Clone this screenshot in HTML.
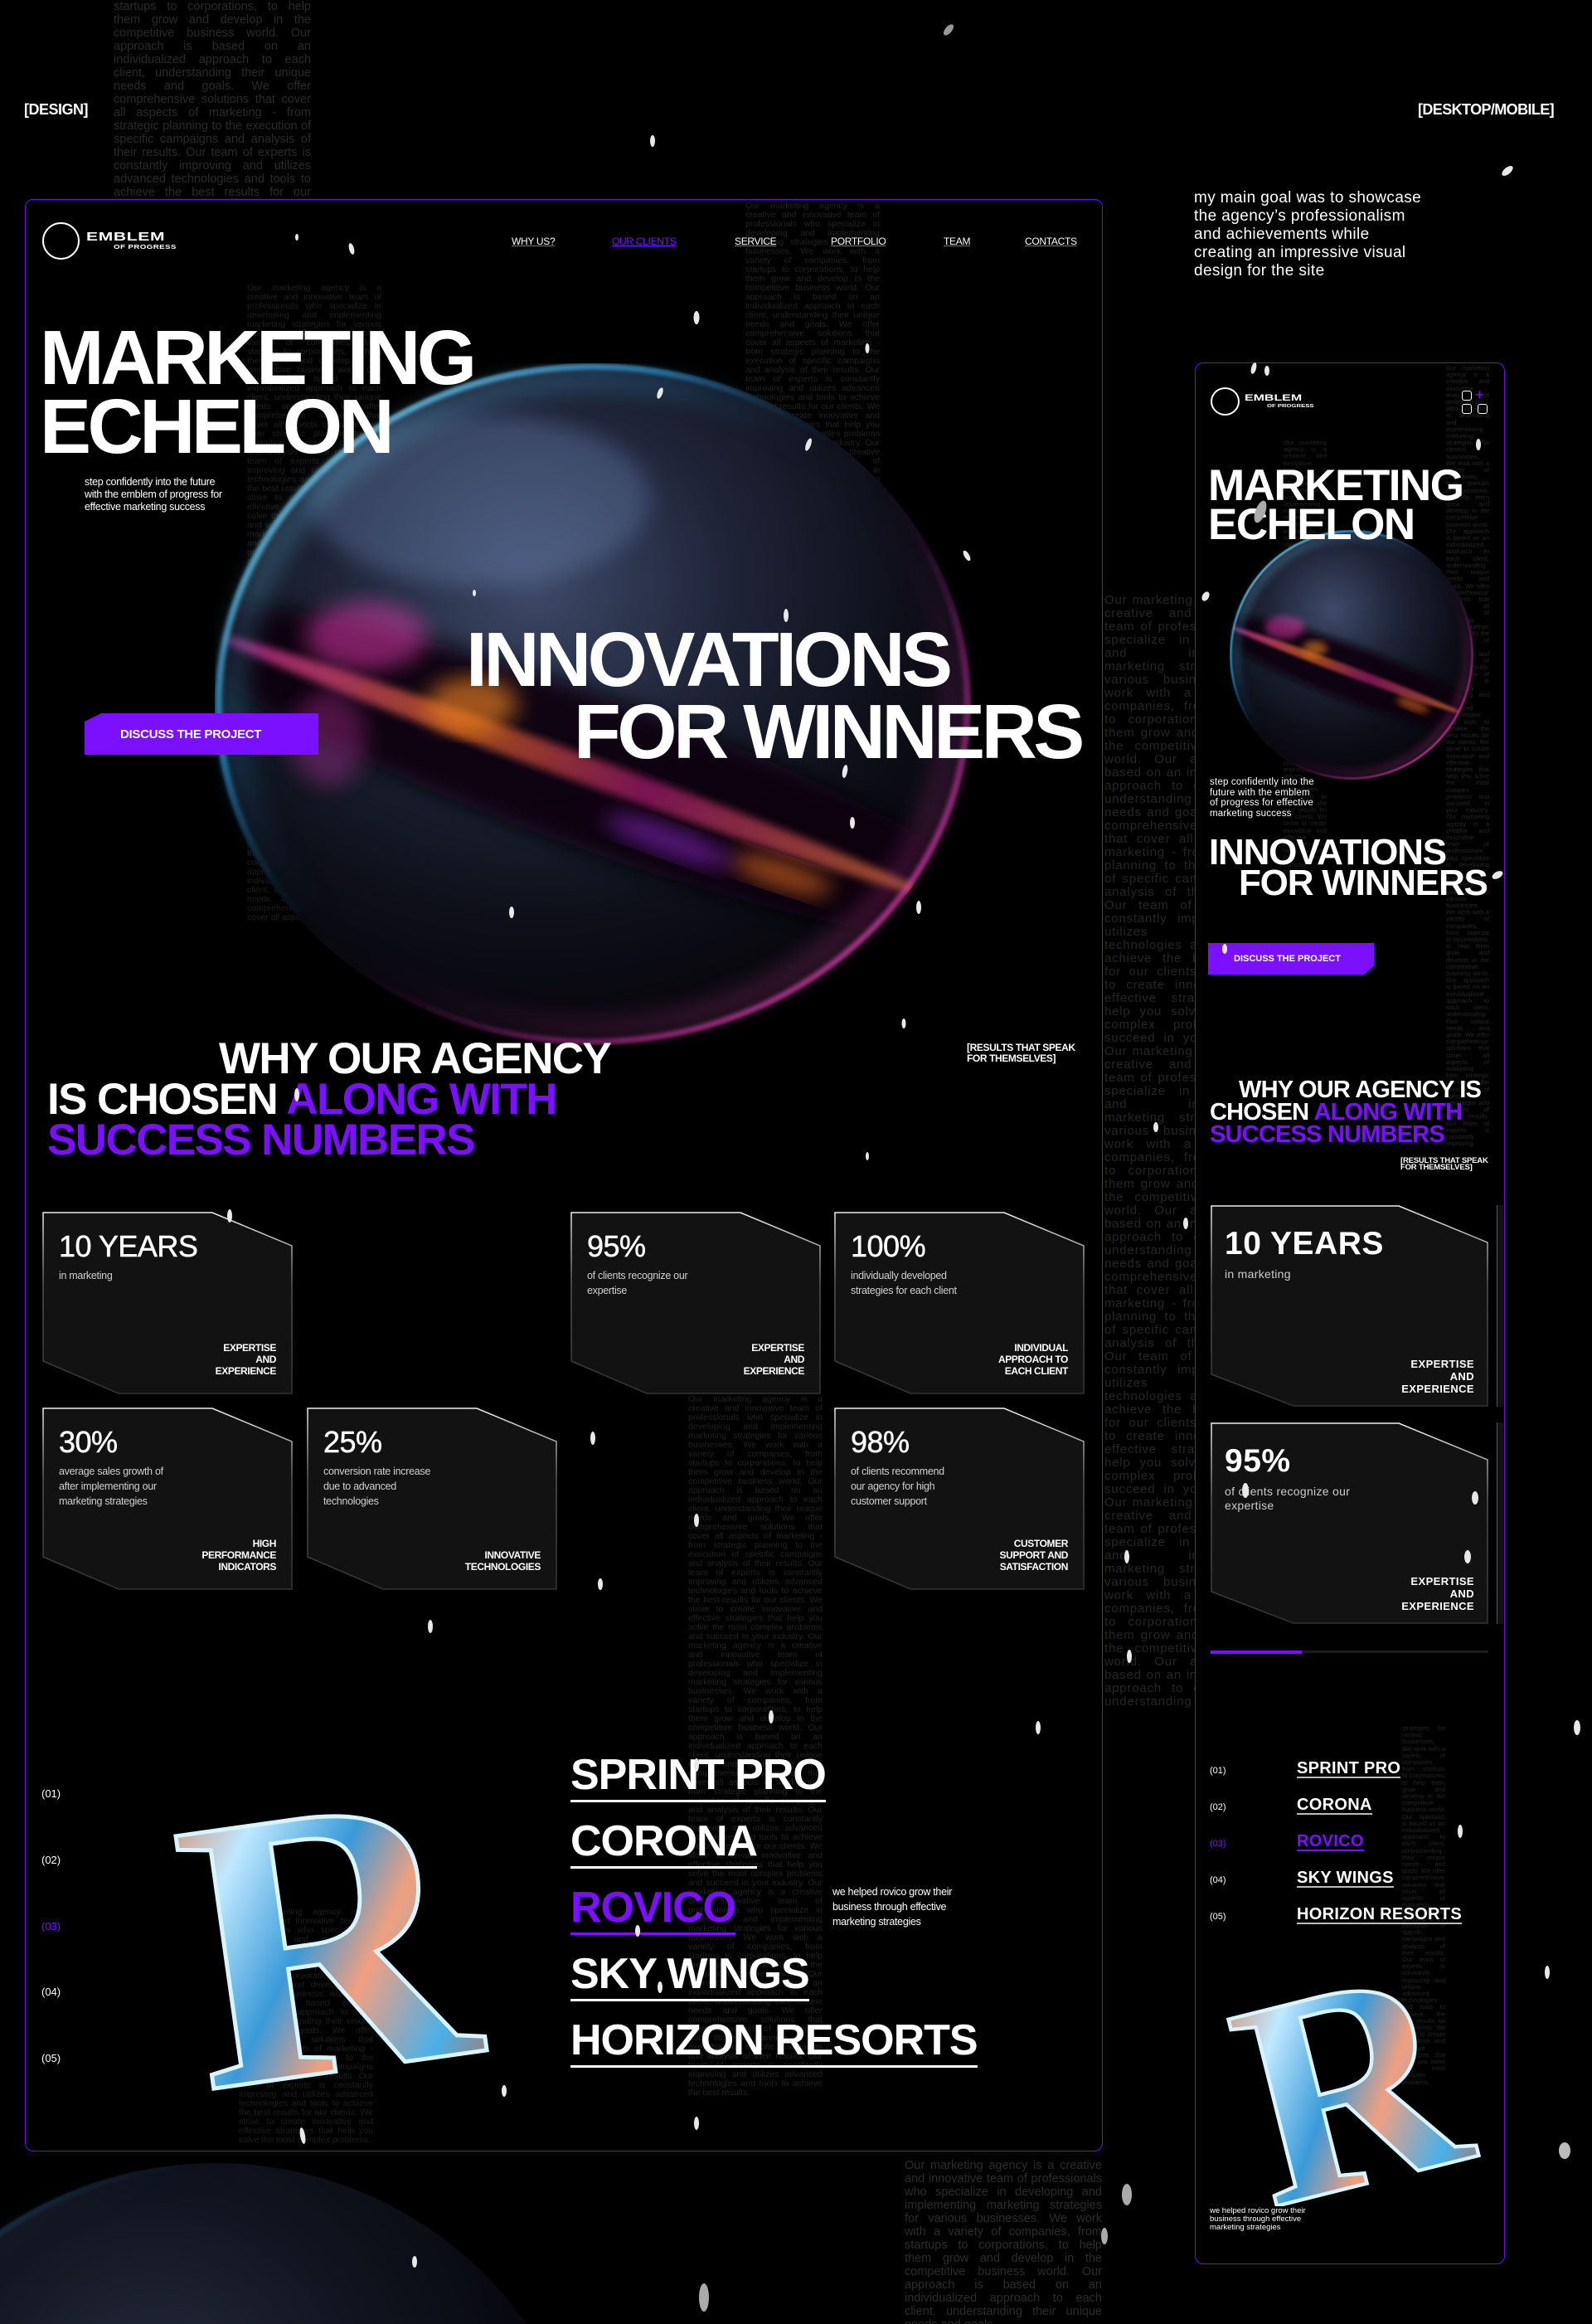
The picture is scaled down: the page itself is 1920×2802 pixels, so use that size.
<!DOCTYPE html>
<html><head><meta charset="utf-8">
<style>
*{margin:0;padding:0;box-sizing:border-box}
html,body{width:1920px;height:2802px;background:#000;overflow:hidden}
body{position:relative;font-family:"Liberation Sans",Arial,sans-serif;color:#fff}
#wrap{position:absolute;left:0;top:0;width:1920px;height:2802px;overflow:hidden}
.a{position:absolute}
.bg{position:absolute;color:#262626;text-align:justify;overflow:hidden;font-family:"Liberation Sans",sans-serif}
.b{font-weight:700}
.nav{position:absolute;top:284px;font-size:12px;text-decoration:underline;text-decoration-color:#777;letter-spacing:-0.3px}
.h1{position:absolute;font-weight:700;font-size:93px;line-height:1;letter-spacing:-4.5px;white-space:nowrap}
.card{position:absolute;width:302px;height:220px}
.card svg{position:absolute;left:0;top:0}
.num{position:absolute;left:20px;top:24px;font-size:36px;line-height:36px;-webkit-text-stroke:.5px #fff;letter-spacing:-0.5px}
.sub{position:absolute;left:20px;top:68px;font-size:12.5px;line-height:18px;color:#cfcfcf;letter-spacing:-0.3px}
.lab{position:absolute;right:20px;bottom:21px;font-size:12px;line-height:14px;text-align:right;font-weight:700;letter-spacing:-0.4px}
.mcard{position:absolute;width:335px;height:243px}
.mcard svg{position:absolute;left:0;top:0}
.mnum{position:absolute;left:17px;top:27px;font-size:39px;line-height:40px;font-weight:700;letter-spacing:0.5px}
.msub{position:absolute;left:17px;top:75px;font-size:14px;line-height:17px;color:#ccc;letter-spacing:.3px}
.mlab{position:absolute;right:17px;bottom:14px;font-size:13px;line-height:15px;text-align:right;font-weight:700;letter-spacing:.4px}
.cl{position:absolute;left:688px;font-size:52px;line-height:52px;font-weight:700;letter-spacing:-1px;border-bottom:3px solid #fff;padding-bottom:4px;white-space:nowrap}
.cn{position:absolute;left:50px;font-size:13px}
.mcl{position:absolute;left:1564px;font-size:20px;line-height:20px;font-weight:700;border-bottom:2px solid #bbb;white-space:nowrap;letter-spacing:.3px}
.mcn{position:absolute;left:1459px;font-size:11px}
.pur{color:#7a10ff}
</style></head><body><div id="wrap">

<svg width="0" height="0" style="position:absolute">
<defs>
<radialGradient id="sb" cx="42%" cy="32%" r="68%"><stop offset="0" stop-color="#3e4a68"/><stop offset=".4" stop-color="#1e2336"/><stop offset=".75" stop-color="#0d0e17"/><stop offset="1" stop-color="#07070a"/></radialGradient>
<linearGradient id="rim" x1="0" y1="0" x2="1" y2="1"><stop offset="0" stop-color="#a8f4ff"/><stop offset=".3" stop-color="#2a9ad8" stop-opacity=".7"/><stop offset=".5" stop-color="#000" stop-opacity="0"/><stop offset=".72" stop-color="#c02aa0" stop-opacity=".5"/><stop offset="1" stop-color="#ff60c0"/></linearGradient>
<linearGradient id="prim" x1="0" y1="0" x2="1" y2=".6"><stop offset="0" stop-color="#4aa0e0"/><stop offset=".4" stop-color="#000" stop-opacity="0"/><stop offset=".7" stop-color="#000" stop-opacity="0"/><stop offset="1" stop-color="#e0501a"/></linearGradient>
<linearGradient id="st" x1="0" y1="0" x2="1" y2="0"><stop offset="0" stop-color="#ff3ad0"/><stop offset=".35" stop-color="#ff7a20"/><stop offset=".6" stop-color="#c02080"/><stop offset="1" stop-color="#ff8a30"/></linearGradient>
<linearGradient id="cg" x1="0" y1="0" x2="0" y2="1"><stop offset="0" stop-color="#eee"/><stop offset=".4" stop-color="#555"/><stop offset="1" stop-color="#333"/></linearGradient>
<linearGradient id="rg" x1="0" y1="0" x2="1" y2="1"><stop offset="0" stop-color="#e06a30"/><stop offset=".25" stop-color="#bfe8ff"/><stop offset=".45" stop-color="#3a9ad8"/><stop offset=".6" stop-color="#f0a080"/><stop offset=".8" stop-color="#4ab0e8"/><stop offset="1" stop-color="#e05a20"/></linearGradient>
<filter id="bl" x="-20%" y="-20%" width="140%" height="140%"><feGaussianBlur stdDeviation="3"/></filter>
<filter id="bl2" x="-20%" y="-20%" width="140%" height="140%"><feGaussianBlur stdDeviation="1.2"/></filter>
<filter id="bl1" x="-20%" y="-20%" width="140%" height="140%"><feGaussianBlur stdDeviation=".6"/></filter>
<clipPath id="cc"><circle cx="100" cy="100" r="100"/></clipPath>
</defs>
</svg>

<!-- background text columns -->
<div class="bg" style="left:137px;top:0;width:238px;height:240px;font-size:14.5px;line-height:16px;color:#2a2a2a;">startups to corporations, to help them grow and develop in the competitive business world. Our approach is based on an individualized approach to each client, understanding their unique needs and goals. We offer comprehensive solutions that cover all aspects of marketing - from strategic planning to the execution of specific campaigns and analysis of their results. Our team of experts is constantly improving and utilizes advanced technologies and tools to achieve the best results for our clients.</div>

<div class="bg" style="left:298px;top:342px;width:162px;height:960px;font-size:10.5px;line-height:11px;color:#1f1f1f;">Our marketing agency is a creative and innovative team of professionals who specialize in developing and implementing marketing strategies for various businesses. We work with a variety of companies, from startups to corporations, to help them grow and develop in the competitive business world. Our approach is based on an individualized approach to each client, understanding their unique needs and goals. We offer comprehensive solutions that cover all aspects of marketing - from strategic planning to the execution of specific campaigns and analysis of their results. Our team of experts is constantly improving and utilizes advanced technologies and tools to achieve the best results for our clients. We strive to create innovative and effective strategies that help you solve the most complex problems and succeed in your industry. Our marketing agency is a creative and innovative team of professionals who specialize in developing and implementing marketing strategies for various businesses. We work with a variety of companies, from startups to corporations, to help them grow and develop in the competitive business world. Our approach is based on an individualized approach to each client, understanding their unique needs and goals. We offer comprehensive solutions that cover all aspects of marketing - from strategic planning to the execution of specific campaigns and analysis of their results. Our team of experts is constantly improving and utilizes advanced technologies and tools to achieve the best results for our clients. We strive to create innovative and effective strategies that help you solve the most complex problems and succeed in your industry. Our marketing agency is a creative and innovative team of professionals who specialize in developing and implementing marketing strategies for various businesses. We work with a variety of companies, from startups to corporations, to help them grow and develop in the competitive business world. Our approach is based on an individualized approach to each client, understanding their unique needs and goals. We offer comprehensive solutions that cover all aspects of marketing.</div>

<div class="bg" style="left:899px;top:243px;width:162px;height:440px;font-size:10.5px;line-height:11px;color:#222;">Our marketing agency is a creative and innovative team of professionals who specialize in developing and implementing marketing strategies for various businesses. We work with a variety of companies, from startups to corporations, to help them grow and develop in the competitive business world. Our approach is based on an individualized approach to each client, understanding their unique needs and goals. We offer comprehensive solutions that cover all aspects of marketing - from strategic planning to the execution of specific campaigns and analysis of their results. Our team of experts is constantly improving and utilizes advanced technologies and tools to achieve the best results for our clients. We strive to create innovative and effective strategies that help you solve the most complex problems and succeed in your industry. Our marketing agency is a creative and innovative team of professionals who specialize in developing and implementing marketing strategies for various businesses. We work with a variety of companies, from startups to corporations, to help them grow and develop in the competitive business world.</div>

<div class="bg" style="left:830px;top:1682px;width:162px;height:910px;font-size:10.5px;line-height:11px;color:#222;">Our marketing agency is a creative and innovative team of professionals who specialize in developing and implementing marketing strategies for various businesses. We work with a variety of companies, from startups to corporations, to help them grow and develop in the competitive business world. Our approach is based on an individualized approach to each client, understanding their unique needs and goals. We offer comprehensive solutions that cover all aspects of marketing - from strategic planning to the execution of specific campaigns and analysis of their results. Our team of experts is constantly improving and utilizes advanced technologies and tools to achieve the best results for our clients. We strive to create innovative and effective strategies that help you solve the most complex problems and succeed in your industry. Our marketing agency is a creative and innovative team of professionals who specialize in developing and implementing marketing strategies for various businesses. We work with a variety of companies, from startups to corporations, to help them grow and develop in the competitive business world. Our approach is based on an individualized approach to each client, understanding their unique needs and goals. We offer comprehensive solutions that cover all aspects of marketing - from strategic planning to the execution of specific campaigns and analysis of their results. Our team of experts is constantly improving and utilizes advanced technologies and tools to achieve the best results for our clients. We strive to create innovative and effective strategies that help you solve the most complex problems and succeed in your industry. Our marketing agency is a creative and innovative team of professionals who specialize in developing and implementing marketing strategies for various businesses. We work with a variety of companies, from startups to corporations, to help them grow and develop in the competitive business world. Our approach is based on an individualized approach to each client, understanding their unique needs and goals. We offer comprehensive solutions that cover all aspects of marketing - from strategic planning to the execution of specific campaigns and analysis of their results. Our team of experts is constantly improving and utilizes advanced technologies and tools to achieve the best results.</div>

<div class="bg" style="left:288px;top:2300px;width:162px;height:290px;font-size:10.5px;line-height:11px;color:#1e1e1e;">Our marketing agency is a creative and innovative team of professionals who specialize in developing and implementing marketing strategies for various businesses. We work with a variety of companies, from startups to corporations, to help them grow and develop in the competitive business world. Our approach is based on an individualized approach to each client, understanding their unique needs and goals. We offer comprehensive solutions that cover all aspects of marketing - from strategic planning to the execution of specific campaigns and analysis of their results. Our team of experts is constantly improving and utilizes advanced technologies and tools to achieve the best results for our clients. We strive to create innovative and effective strategies that help you solve the most complex problems.</div>

<div class="bg" style="left:1332px;top:716px;width:200px;height:1345px;font-size:15px;line-height:16px;color:#262626;letter-spacing:.8px;">Our marketing agency is a creative and innovative team of professionals who specialize in developing and implementing marketing strategies for various businesses. We work with a variety of companies, from startups to corporations, to help them grow and develop in the competitive business world. Our approach is based on an individualized approach to each client, understanding their unique needs and goals. We offer comprehensive solutions that cover all aspects of marketing - from strategic planning to the execution of specific campaigns and analysis of their results. Our team of experts is constantly improving and utilizes advanced technologies and tools to achieve the best results for our clients. We strive to create innovative and effective strategies that help you solve the most complex problems and succeed in your industry. Our marketing agency is a creative and innovative team of professionals who specialize in developing and implementing marketing strategies for various businesses. We work with a variety of companies, from startups to corporations, to help them grow and develop in the competitive business world. Our approach is based on an individualized approach to each client, understanding their unique needs and goals. We offer comprehensive solutions that cover all aspects of marketing - from strategic planning to the execution of specific campaigns and analysis of their results. Our team of experts is constantly improving and utilizes advanced technologies and tools to achieve the best results for our clients. We strive to create innovative and effective strategies that help you solve the most complex problems and succeed in your industry. Our marketing agency is a creative and innovative team of professionals who specialize in developing and implementing marketing strategies for various businesses. We work with a variety of companies, from startups to corporations, to help them grow and develop in the competitive business world. Our approach is based on an individualized approach to each client, understanding their unique needs and goals. We offer comprehensive solutions that cover all aspects of marketing - from strategic planning to the execution of specific campaigns and analysis of their results. Our team of experts is constantly improving and utilizes advanced technologies.</div>

<div class="bg" style="left:1091px;top:2603px;width:238px;height:199px;font-size:14.5px;line-height:16px;color:#2c2c2c;">Our marketing agency is a creative and innovative team of professionals who specialize in developing and implementing marketing strategies for various businesses. We work with a variety of companies, from startups to corporations, to help them grow and develop in the competitive business world. Our approach is based on an individualized approach to each client, understanding their unique needs and goals.</div>

<!-- bottom planet (cropped to frame) -->
<svg class="a" style="left:0;top:2608px" width="720" height="194" viewBox="43.48 0 156.52 42.17" preserveAspectRatio="none">
<circle cx="100" cy="100" r="100" fill="url(#sb)" opacity=".6"/>
<circle cx="100" cy="100" r="99.3" fill="none" stroke="url(#prim)" stroke-width="1.2" filter="url(#bl1)"/>
<circle cx="100" cy="100" r="97" fill="none" stroke="url(#prim)" stroke-width="4" opacity=".25" filter="url(#bl)"/>
</svg>

<!-- top labels -->
<div class="a b" style="left:29px;top:122px;font-size:18px;letter-spacing:-0.5px">[DESIGN]</div>
<div class="a b" style="left:1710px;top:122px;font-size:18px;letter-spacing:-0.6px">[DESKTOP/MOBILE]</div>

<!-- desktop frame -->
<div class="a" style="left:30px;top:240px;width:1300px;height:2354px;border:1.5px solid #6a0ef0;border-radius:10px"></div>

<!-- logo -->
<div class="a" style="left:51px;top:268px;width:45px;height:45px;border:2.5px solid #fff;border-radius:50%"></div>
<div class="a b" style="left:104px;top:277px;font-size:15px;letter-spacing:.5px;transform:scaleX(1.4);transform-origin:left">EMBLEM</div>
<div class="a b" style="left:137px;top:293px;font-size:7.5px;letter-spacing:.3px;transform:scaleX(1.3);transform-origin:left">OF PROGRESS</div>

<div class="nav" style="left:617px">WHY US?</div>
<div class="nav pur" style="left:738px;text-decoration-color:#7a10ff">OUR CLIENTS</div>
<div class="nav" style="left:886px">SERVICE</div>
<div class="nav" style="left:1002px">PORTFOLIO</div>
<div class="nav" style="left:1138px">TEAM</div>
<div class="nav" style="left:1236px">CONTACTS</div>

<!-- sphere desktop -->
<svg class="a" style="left:259px;top:438px" width="912" height="822" viewBox="0 0 200 200" preserveAspectRatio="none">
<circle cx="100" cy="100" r="100" fill="url(#sb)"/>
<g clip-path="url(#cc)">
<ellipse cx="70" cy="40" rx="45" ry="25" fill="#7a9ad0" opacity=".28" filter="url(#bl)"/>
<ellipse cx="100" cy="120" rx="120" ry="22" transform="rotate(22 100 120)" fill="#0a0610" opacity=".9" filter="url(#bl)"/>
<ellipse cx="95" cy="118" rx="100" ry="4" transform="rotate(22 95 118)" fill="url(#st)" opacity=".6" filter="url(#bl2)"/>
<ellipse cx="40" cy="80" rx="16" ry="10" fill="#ff40c0" opacity=".45" filter="url(#bl)"/>
<ellipse cx="68" cy="100" rx="12" ry="8" fill="#ff8a20" opacity=".6" filter="url(#bl)"/>
<ellipse cx="30" cy="110" rx="10" ry="14" fill="#c030a0" opacity=".35" filter="url(#bl)"/>
<ellipse cx="150" cy="150" rx="14" ry="4" transform="rotate(20 150 150)" fill="#ff7a20" opacity=".55" filter="url(#bl)"/>
<ellipse cx="120" cy="140" rx="18" ry="4" transform="rotate(22 120 140)" fill="#b030ff" opacity=".45" filter="url(#bl)"/>
</g>
<circle cx="100" cy="100" r="99" fill="none" stroke="url(#rim)" stroke-width="1.6" filter="url(#bl1)"/>
<circle cx="100" cy="100" r="95" fill="none" stroke="url(#rim)" stroke-width="7" opacity=".3" filter="url(#bl)"/>
</svg>

<div class="h1" style="left:48px;top:385px">MARKETING</div>
<div class="h1" style="left:48px;top:468px">ECHELON</div>
<div class="a" style="left:102px;top:574px;font-size:12.5px;line-height:15px;letter-spacing:-0.3px">step confidently into the future<br>with the emblem of progress for<br>effective marketing success</div>
<div class="h1" style="left:562px;top:749px">INNOVATIONS</div>
<div class="h1" style="left:692px;top:836px">FOR WINNERS</div>

<svg class="a" style="left:102px;top:860px" width="282" height="50"><polygon points="20,0 282,0 282,50 0,50 0,10" fill="#7a10ff"/></svg>
<div class="a b" style="left:145px;top:877px;font-size:15px;letter-spacing:-0.3px">DISCUSS THE PROJECT</div>

<!-- why section -->
<div class="a b" style="left:264px;top:1252px;font-size:53px;line-height:49px;letter-spacing:-1.6px;white-space:nowrap">WHY OUR AGENCY</div>
<div class="a b" style="left:57px;top:1301px;font-size:53px;line-height:49px;letter-spacing:-1.6px;white-space:nowrap">IS CHOSEN <span class="pur">ALONG WITH</span></div>
<div class="a b pur" style="left:57px;top:1350px;font-size:53px;line-height:49px;letter-spacing:-1.6px;white-space:nowrap">SUCCESS NUMBERS</div>
<div class="a b" style="left:1166px;top:1257px;font-size:12px;line-height:13px;letter-spacing:-0.4px">[RESULTS THAT SPEAK<br>FOR THEMSELVES]</div>

<!-- cards -->
<div class="card" style="left:51px;top:1461px"><svg width="302" height="220"><polygon points="1,1 205,1 301,41 301,219 92,219 1,180" fill="#121212" stroke="url(#cg)" stroke-width="1.5"/></svg><div class="num">10 YEARS</div><div class="sub">in marketing</div><div class="lab">EXPERTISE<br>AND<br>EXPERIENCE</div></div>
<div class="card" style="left:688px;top:1461px"><svg width="302" height="220"><polygon points="1,1 205,1 301,41 301,219 92,219 1,180" fill="#121212" stroke="url(#cg)" stroke-width="1.5"/></svg><div class="num">95%</div><div class="sub">of clients recognize our<br>expertise</div><div class="lab">EXPERTISE<br>AND<br>EXPERIENCE</div></div>
<div class="card" style="left:1006px;top:1461px"><svg width="302" height="220"><polygon points="1,1 205,1 301,41 301,219 92,219 1,180" fill="#121212" stroke="url(#cg)" stroke-width="1.5"/></svg><div class="num">100%</div><div class="sub">individually developed<br>strategies for each client</div><div class="lab">INDIVIDUAL<br>APPROACH TO<br>EACH CLIENT</div></div>
<div class="card" style="left:51px;top:1697px"><svg width="302" height="220"><polygon points="1,1 205,1 301,41 301,219 92,219 1,180" fill="#121212" stroke="url(#cg)" stroke-width="1.5"/></svg><div class="num">30%</div><div class="sub">average sales growth of<br>after implementing our<br>marketing strategies</div><div class="lab">HIGH<br>PERFORMANCE<br>INDICATORS</div></div>
<div class="card" style="left:370px;top:1697px"><svg width="302" height="220"><polygon points="1,1 205,1 301,41 301,219 92,219 1,180" fill="#121212" stroke="url(#cg)" stroke-width="1.5"/></svg><div class="num">25%</div><div class="sub">conversion rate increase<br>due to advanced<br>technologies</div><div class="lab">INNOVATIVE<br>TECHNOLOGIES</div></div>
<div class="card" style="left:1006px;top:1697px"><svg width="302" height="220"><polygon points="1,1 205,1 301,41 301,219 92,219 1,180" fill="#121212" stroke="url(#cg)" stroke-width="1.5"/></svg><div class="num">98%</div><div class="sub">of clients recommend<br>our agency for high<br>customer support</div><div class="lab">CUSTOMER<br>SUPPORT AND<br>SATISFACTION</div></div>

<!-- R desktop -->
<svg class="a" style="left:180px;top:2100px" width="460" height="430" viewBox="0 0 460 430">
<text x="40" y="395" transform="rotate(-8 230 215)" font-family="Liberation Serif,serif" font-weight="700" font-size="470" fill="url(#rg)" stroke="#d8f4ff" stroke-width="5">R</text>
</svg>

<!-- clients desktop -->
<div class="cn" style="top:2155px">(01)</div>
<div class="cn" style="top:2235px">(02)</div>
<div class="cn pur" style="top:2315px">(03)</div>
<div class="cn" style="top:2394px">(04)</div>
<div class="cn" style="top:2474px">(05)</div>
<div class="cl" style="top:2114px">SPRINT PRO</div>
<div class="cl" style="top:2194px">CORONA</div>
<div class="cl pur" style="top:2274px;border-color:#7a10ff">ROVICO</div>
<div class="cl" style="top:2354px">SKY WINGS</div>
<div class="cl" style="top:2434px">HORIZON RESORTS</div>
<div class="a" style="left:1004px;top:2272px;font-size:12.5px;line-height:18px;letter-spacing:-0.3px">we helped rovico grow their<br>business through effective<br>marketing strategies</div>

<!-- right intro -->
<div class="a" style="left:1440px;top:228px;font-size:19px;line-height:22px;letter-spacing:.4px">my main goal was to showcase<br>the agency’s professionalism<br>and achievements while<br>creating an impressive visual<br>design for the site</div>

<!-- mobile frame -->
<div class="a" style="left:1441px;top:437px;width:374px;height:2293px;border:1.5px solid #6a0ef0;border-radius:10px;background:#000"></div>
<div class="bg" style="left:1744px;top:440px;width:52px;height:1260px;font-size:7.5px;line-height:8.2px;color:#262626;">Our marketing agency is a creative and innovative team of professionals who specialize in developing and implementing marketing strategies for various businesses. We work with a variety of companies, from startups to corporations, to help them grow and develop in the competitive business world. Our approach is based on an individualized approach to each client, understanding their unique needs and goals. We offer comprehensive solutions that cover all aspects of marketing - from strategic planning to the execution of specific campaigns and analysis of their results. Our team of experts is constantly improving and utilizes advanced technologies and tools to achieve the best results for our clients. We strive to create innovative and effective strategies that help you solve the most complex problems and succeed in your industry. Our marketing agency is a creative and innovative team of professionals who specialize in developing and implementing marketing strategies for various businesses. We work with a variety of companies, from startups to corporations, to help them grow and develop in the competitive business world. Our approach is based on an individualized approach to each client, understanding their unique needs and goals. We offer comprehensive solutions that cover all aspects of marketing - from strategic planning to the execution of specific campaigns and analysis of their results. Our team of experts is constantly improving.</div>
<div class="bg" style="left:1548px;top:530px;width:52px;height:830px;font-size:7.5px;line-height:8.2px;color:#222;">Our marketing agency is a creative and innovative team of professionals who specialize in developing and implementing marketing strategies for various businesses. We work with a variety of companies, from startups to corporations, to help them grow and develop in the competitive business world. Our approach is based on an individualized approach to each client, understanding their unique needs and goals. We offer comprehensive solutions that cover all aspects of marketing - from strategic planning to the execution of specific campaigns and analysis of their results. Our team of experts is constantly improving and utilizes advanced technologies and tools to achieve the best results for our clients. We strive to create innovative and effective strategies that help you solve the most complex problems.</div>
<div class="bg" style="left:1691px;top:2080px;width:52px;height:640px;font-size:7.5px;line-height:8.2px;color:#242424;">strategies for various businesses. We work with a variety of companies, from startups to corporations, to help them grow and develop in the competitive business world. Our approach is based on an individualized approach to each client, understanding their unique needs and goals. We offer comprehensive solutions that cover all aspects of marketing - from strategic planning to the execution of specific campaigns and analysis of their results. Our team of experts is constantly improving and utilizes advanced technologies and tools to achieve the best results for our clients. We strive to create innovative and effective strategies that help you solve the most complex problems.</div>

<div class="a" style="left:1460px;top:467px;width:35px;height:34px;border:2px solid #fff;border-radius:50%"></div>
<div class="a b" style="left:1501px;top:474px;font-size:11px;transform:scaleX(1.45);transform-origin:left">EMBLEM</div>
<div class="a b" style="left:1528px;top:487px;font-size:5.5px;transform:scaleX(1.4);transform-origin:left">OF PROGRESS</div>
<div class="a" style="left:1763px;top:471px;width:12px;height:12px;border:1.5px solid #fff;border-radius:3px"></div>
<div class="a" style="left:1779px;top:467px;font-size:18px;line-height:18px;color:#7a10ff">+</div>
<div class="a" style="left:1763px;top:487px;width:12px;height:12px;border:1.5px solid #fff;border-radius:3px"></div>
<div class="a" style="left:1782px;top:487px;width:12px;height:12px;border:1.5px solid #fff;border-radius:3px"></div>

<svg class="a" style="left:1483px;top:639px" width="294" height="301" viewBox="0 0 200 200" preserveAspectRatio="none">
<circle cx="100" cy="100" r="100" fill="url(#sb)"/>
<g clip-path="url(#cc)">
<ellipse cx="100" cy="115" rx="120" ry="22" transform="rotate(20 100 115)" fill="#0a0610" opacity=".9" filter="url(#bl)"/>
<ellipse cx="95" cy="112" rx="100" ry="4" transform="rotate(20 95 112)" fill="url(#st)" opacity=".6" filter="url(#bl2)"/>
<ellipse cx="45" cy="78" rx="16" ry="9" fill="#ff40c0" opacity=".45" filter="url(#bl)"/>
<ellipse cx="70" cy="95" rx="10" ry="6" fill="#ff8a20" opacity=".55" filter="url(#bl)"/>
<ellipse cx="150" cy="140" rx="14" ry="4" transform="rotate(20 150 140)" fill="#ff7a20" opacity=".55" filter="url(#bl)"/>
</g>
<circle cx="100" cy="100" r="99" fill="none" stroke="url(#rim)" stroke-width="1.6" filter="url(#bl1)"/>
<circle cx="100" cy="100" r="95" fill="none" stroke="url(#rim)" stroke-width="7" opacity=".3" filter="url(#bl)"/>
</svg>

<div class="a b" style="left:1457px;top:562px;font-size:53px;line-height:47px;letter-spacing:-1.5px;white-space:nowrap">MARKETING<br>ECHELON</div>
<div class="a" style="left:1459px;top:937px;font-size:11.5px;line-height:12.5px;letter-spacing:.2px">step confidently into the<br>future with the emblem<br>of progress for effective<br>marketing success</div>
<div class="a b" style="left:1458px;top:1009px;font-size:44px;line-height:38px;letter-spacing:-1.2px;white-space:nowrap">INNOVATIONS</div>
<div class="a b" style="left:1494px;top:1046px;font-size:44px;line-height:38px;letter-spacing:-1.2px;white-space:nowrap">FOR WINNERS</div>
<svg class="a" style="left:1457px;top:1137px" width="200" height="38"><polygon points="0,0 200,0 200,28 188,38 0,38" fill="#7a10ff"/></svg>
<div class="a b" style="left:1488px;top:1150px;font-size:11px">DISCUSS THE PROJECT</div>

<div class="a b" style="left:1494px;top:1301px;font-size:29px;line-height:27px;letter-spacing:-0.8px;white-space:nowrap">WHY OUR AGENCY IS</div>
<div class="a b" style="left:1459px;top:1328px;font-size:29px;line-height:27px;letter-spacing:-0.8px;white-space:nowrap">CHOSEN <span class="pur">ALONG WITH</span></div>
<div class="a b pur" style="left:1459px;top:1355px;font-size:29px;line-height:27px;letter-spacing:-0.8px;white-space:nowrap">SUCCESS NUMBERS</div>
<div class="a b" style="left:1689px;top:1396px;font-size:9.5px;line-height:8px;letter-spacing:-0.2px">[RESULTS THAT SPEAK<br>FOR THEMSELVES]</div>

<div class="mcard" style="left:1460px;top:1453px"><svg width="335" height="243"><polygon points="1,1 227,1 334,45 334,242 100,242 1,204" fill="#121212" stroke="url(#cg)" stroke-width="1.5"/></svg><div class="mnum">10 YEARS</div><div class="msub">in marketing</div><div class="mlab">EXPERTISE<br>AND<br>EXPERIENCE</div></div>
<div class="mcard" style="left:1460px;top:1715px"><svg width="335" height="243"><polygon points="1,1 227,1 334,45 334,242 100,242 1,204" fill="#121212" stroke="url(#cg)" stroke-width="1.5"/></svg><div class="mnum">95%</div><div class="msub">of clients recognize our<br>expertise</div><div class="mlab">EXPERTISE<br>AND<br>EXPERIENCE</div></div>
<div class="a" style="left:1805px;top:1453px;width:8px;height:243px;border-left:1.5px solid #555;background:#121212"></div>
<div class="a" style="left:1805px;top:1715px;width:8px;height:243px;border-left:1.5px solid #555;background:#121212"></div>
<div class="a" style="left:1460px;top:1990px;width:335px;height:3px;background:#1c1c1c"></div>
<div class="a" style="left:1460px;top:1990px;width:110px;height:4px;background:#7a10ff"></div>

<div class="mcn" style="top:2129px">(01)</div>
<div class="mcn" style="top:2173px">(02)</div>
<div class="mcn pur" style="top:2217px">(03)</div>
<div class="mcn" style="top:2261px">(04)</div>
<div class="mcn" style="top:2305px">(05)</div>
<div class="mcl" style="top:2122px">SPRINT PRO</div>
<div class="mcl" style="top:2166px">CORONA</div>
<div class="mcl pur" style="top:2210px;border-color:#7a10ff">ROVICO</div>
<div class="mcl" style="top:2254px">SKY WINGS</div>
<div class="mcl" style="top:2298px">HORIZON RESORTS</div>

<svg class="a" style="left:1465px;top:2330px" width="340" height="330" viewBox="0 0 460 430">
<text x="40" y="400" transform="rotate(-14 230 215)" font-family="Liberation Serif,serif" font-weight="700" font-size="480" fill="url(#rg)" stroke="#d8f4ff" stroke-width="6">R</text>
</svg>
<div class="a" style="left:1459px;top:2661px;font-size:9.5px;line-height:10px">we helped rovico grow their<br>business through effective<br>marketing strategies</div>

<!-- snow -->
<svg class="a" style="left:0;top:0" width="1920" height="2802">
<g fill="#e8e8e8">
<ellipse cx="424" cy="300" rx="3" ry="7" transform="rotate(-15 424 300)"/>
<ellipse cx="840" cy="383" rx="3.5" ry="8"/>
<ellipse cx="796" cy="474" rx="3" ry="7" transform="rotate(20 796 474)"/>
<ellipse cx="358" cy="286" rx="2" ry="4"/>
<ellipse cx="975" cy="536" rx="3" ry="8" transform="rotate(20 975 536)"/>
<ellipse cx="948" cy="742" rx="3" ry="8"/>
<ellipse cx="1046" cy="420" rx="2.5" ry="6"/>
<ellipse cx="1166" cy="670" rx="3" ry="7" transform="rotate(-30 1166 670)"/>
<ellipse cx="1019" cy="930" rx="3" ry="8" transform="rotate(10 1019 930)"/>
<ellipse cx="1028" cy="992" rx="3" ry="7"/>
<ellipse cx="617" cy="1100" rx="3" ry="7"/>
<ellipse cx="1108" cy="1094" rx="3" ry="8"/>
<ellipse cx="1090" cy="1234" rx="2.5" ry="6"/>
<ellipse cx="358" cy="1320" rx="3" ry="8"/>
<ellipse cx="277" cy="1466" rx="3" ry="8"/>
<ellipse cx="724" cy="1910" rx="3" ry="7"/>
<ellipse cx="519" cy="1961" rx="3" ry="8"/>
<ellipse cx="715" cy="1734" rx="3" ry="8"/>
<ellipse cx="840" cy="1833" rx="3" ry="8"/>
<ellipse cx="930" cy="2070" rx="3" ry="8"/>
<ellipse cx="840" cy="2128" rx="3" ry="8"/>
<ellipse cx="769" cy="2328" rx="3" ry="7"/>
<ellipse cx="796" cy="2396" rx="3" ry="7"/>
<ellipse cx="365" cy="2575" rx="3" ry="10" transform="rotate(-10 365 2575)"/>
<ellipse cx="500" cy="2727" rx="3" ry="7"/>
<ellipse cx="849" cy="2770" rx="6" ry="17" fill="#aaa"/>
<ellipse cx="1252" cy="2083" rx="3" ry="8"/>
<ellipse cx="1359" cy="1877" rx="3" ry="8"/>
<ellipse cx="1362" cy="1997" rx="3" ry="8"/>
<ellipse cx="1430" cy="1475" rx="3" ry="7"/>
<ellipse cx="1818" cy="206" rx="4" ry="8" transform="rotate(50 1818 206)"/>
<ellipse cx="1783" cy="536" rx="3" ry="7"/>
<ellipse cx="1454" cy="719" rx="4" ry="6" transform="rotate(30 1454 719)"/>
<ellipse cx="1761" cy="2208" rx="3" ry="8"/>
<ellipse cx="1902" cy="2083" rx="4" ry="9"/>
<ellipse cx="1887" cy="2593" rx="7" ry="10" fill="#bbb"/>
<ellipse cx="1866" cy="2378" rx="3" ry="8"/>
<ellipse cx="1359" cy="2646" rx="6" ry="13" fill="#aaa"/>
<ellipse cx="1332" cy="2696" rx="4" ry="10" fill="#aaa"/>
<ellipse cx="1779" cy="1806" rx="4" ry="8"/>
<ellipse cx="1770" cy="1877" rx="4" ry="8"/>
<ellipse cx="1520" cy="617" rx="6" ry="14" transform="rotate(20 1520 617)" fill="#aaa"/>
<ellipse cx="1477" cy="1144" rx="3" ry="6"/>
<ellipse cx="840" cy="2560" rx="3" ry="8"/>
<ellipse cx="572" cy="715" rx="2" ry="4"/>
<ellipse cx="608" cy="2521" rx="3" ry="7"/>
<ellipse cx="787" cy="170" rx="3" ry="7"/>
<ellipse cx="1144" cy="36" rx="4" ry="8" transform="rotate(40 1144 36)" fill="#999"/>
<ellipse cx="1502" cy="1797" rx="4" ry="9"/>
<ellipse cx="1394" cy="1359" rx="3" ry="6"/>
<ellipse cx="1806" cy="1055" rx="4" ry="7" transform="rotate(60 1806 1055)"/>
<ellipse cx="1046" cy="1394" rx="2" ry="5"/>
<ellipse cx="1512" cy="444" rx="3" ry="7" transform="rotate(15 1512 444)"/>
<ellipse cx="1528" cy="447" rx="3" ry="6"/>
</g>
</svg>
</div></body></html>
